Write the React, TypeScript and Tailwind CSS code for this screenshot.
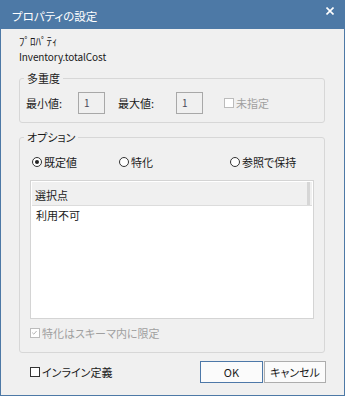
import React from "react";

function CheckBox({ checked = false, disabled = false }: { checked?: boolean; disabled?: boolean }) {
  return (
    <span
      className={
        "relative inline-flex w-[10px] h-[10px] border bg-white shrink-0 " +
        (disabled ? "border-[#bcbcbc]" : "border-[#333333]")
      }
    >
      {checked && (
        <svg viewBox="0 0 10 10" className="absolute left-0 top-0 w-[8px] h-[8px]">
          <path d="M1.5 4.5 L3.5 6.5 L7 2.5" fill="none" stroke={disabled ? "#b0b0b0" : "#222"} strokeWidth="1.2" />
        </svg>
      )}
    </span>
  );
}

function Radio({ checked = false }: { checked?: boolean }) {
  return (
    <span className="inline-flex items-center justify-center w-[10px] h-[10px] rounded-full border border-[#333333] bg-white shrink-0">
      {checked && <span className="w-[4px] h-[4px] rounded-full bg-[#222]" />}
    </span>
  );
}

export default function App() {
  return (
    <div className="w-[345px] h-[396px] bg-[#4d79a6] flex flex-col font-['Noto_Sans_CJK_JP',sans-serif] [font-feature-settings:'palt'] text-[11px] leading-[16px] text-[#1a1a1a]">
      <div className="h-[29px] shrink-0 flex items-center justify-between pl-[12px] pr-[11px] text-white">
        <span className="text-[11.5px] mt-[2px]">プロパティの設定</span>
        <svg viewBox="0 0 8 8" className="w-[8px] h-[8px] -mt-[8px]">
          <path d="M0.5 0.5 L7.5 7.5 M7.5 0.5 L0.5 7.5" stroke="#fff" strokeWidth="1.6" />
        </svg>
      </div>
      <div className="flex-1 mx-[1px] mb-[1px] bg-[#f0f0f0] flex flex-col pl-[18px] pr-[19px] pt-[4px]">
        <div>ﾌﾟﾛﾊﾟﾃｨ</div>
        <div className="text-[10px] tracking-[-0.1px]">Inventory.totalCost</div>

        <fieldset className="mt-[5px] border border-[#d7d7d7] rounded-[3px] px-0 pt-[6px] pb-[8px] m-0 min-w-0">
          <legend className="ml-[4px] px-[3px] leading-[16px]">多重度</legend>
          <div className="flex items-center h-[22px] pl-[6px]">
            <span className="w-[52px]">最小値:</span>
            <span className="w-[27px] h-[22px] border border-[#a8a8a8] bg-[#f0f0f0] flex items-center pl-[5px] text-[10px] text-[#4a4a5a]">1</span>
            <span className="w-[58px] ml-[13px]">最大値:</span>
            <span className="w-[27px] h-[22px] border border-[#a8a8a8] bg-[#f0f0f0] flex items-center pl-[5px] text-[10px] text-[#4a4a5a]">1</span>
            <span className="ml-[21px] flex items-center gap-[2px] text-[#a0a0a0]">
              <CheckBox disabled />
              <span>未指定</span>
            </span>
          </div>
        </fieldset>

        <fieldset className="mt-[6px] border border-[#d7d7d7] rounded-[3px] px-[10px] pt-[9px] pb-[11px] m-0 min-w-0">
          <legend className="-ml-[6px] px-[3px] leading-[16px]">オプション</legend>
          <div className="flex items-center h-[16px] pl-[2px]">
            <span className="w-[87px] flex items-center gap-[2px]">
              <Radio checked />
              <span>既定値</span>
            </span>
            <span className="w-[111px] flex items-center gap-[2px]">
              <Radio />
              <span>特化</span>
            </span>
            <span className="flex items-center gap-[2px]">
              <Radio />
              <span>参照で保持</span>
            </span>
          </div>
          <div className="mt-[10px] h-[139px] border border-[#d4d4d4] bg-white flex flex-col p-[1px]">
            <div className="h-[24px] bg-[#f0f0f0] border-b border-[#dcdcdc] flex">
              <div className="flex-1 flex items-end pb-[2px] pl-[3px] border-r-[3px] border-[#d6d6d6]">選択点</div>
              <div className="w-[2px]" />
            </div>
            <div className="h-[17px] flex items-center pl-[4px]">利用不可</div>
          </div>
          <div className="mt-[6px] flex items-center gap-[2px] text-[#a0a0a0] h-[16px]">
            <CheckBox checked disabled />
            <span>特化はスキーマ内に限定</span>
          </div>
        </fieldset>

        <div className="mt-[8px] flex items-center h-[22px]">
          <span className="ml-[11px] flex items-center gap-[2px]">
            <CheckBox />
            <span>インライン定義</span>
          </span>
          <div className="ml-auto flex gap-[1px] -mr-[1px]">
            <button className="w-[63px] h-[22px] border border-[#4d78a8] bg-[#fbfbfb] flex items-center justify-center">OK</button>
            <button className="w-[62px] h-[22px] border border-[#adadad] bg-[#fbfbfb] flex items-center justify-center">キャンセル</button>
          </div>
        </div>
      </div>
    </div>
  );
}
